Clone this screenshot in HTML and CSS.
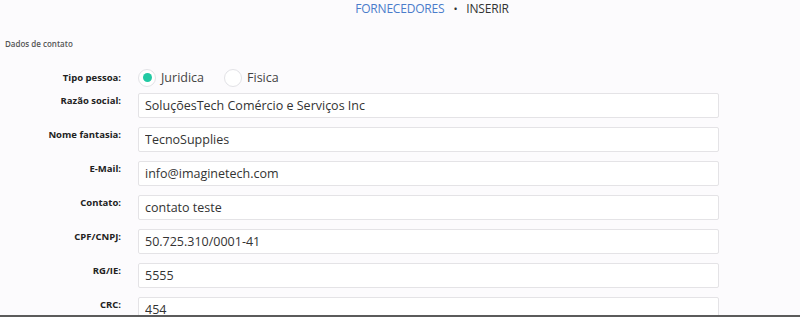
FILE: index.html
```html
<!DOCTYPE html>
<html lang="pt">

<head>
    <meta charset="UTF-8">
    <meta name="viewport" content="width=device-width, initial-scale=1.0">
    <title>Fornecedores - Inserir</title>
    <link rel="stylesheet" href="styles.css">
</head>

<body>
    <div class="page">
        <div class="crumbs">
            <a class="crumb-link" href="#">FORNECEDORES</a>
            <span class="crumb-sep">&bull;</span>
            <span class="crumb-current">INSERIR</span>
        </div>

        <div class="section-title">Dados de contato</div>

        <form class="form">
            <div class="row radio-row">
                <label class="label">Tipo pessoa:</label>
                <div class="options">
                    <label class="option"><input type="radio" name="tipo" checked><span class="dot"></span>Juridica</label>
                    <label class="option"><input type="radio" name="tipo"><span class="dot"></span>Fisica</label>
                </div>
            </div>
            <div class="row">
                <label class="label">Razão social:</label>
                <input class="field" type="text" value="SoluçõesTech Comércio e Serviços Inc">
            </div>
            <div class="row">
                <label class="label">Nome fantasia:</label>
                <input class="field" type="text" value="TecnoSupplies">
            </div>
            <div class="row">
                <label class="label">E-Mail:</label>
                <input class="field" type="text" value="info@imaginetech.com">
            </div>
            <div class="row">
                <label class="label">Contato:</label>
                <input class="field" type="text" value="contato teste">
            </div>
            <div class="row">
                <label class="label">CPF/CNPJ:</label>
                <input class="field" type="text" value="50.725.310/0001-41">
            </div>
            <div class="row">
                <label class="label">RG/IE:</label>
                <input class="field" type="text" value="5555">
            </div>
            <div class="row">
                <label class="label">CRC:</label>
                <input class="field" type="text" value="454">
            </div>
        </form>
    </div>
</body>

</html>
```

FILE: styles.css
```css
* {
    margin: 0;
    padding: 0;
    box-sizing: border-box;
    font-family: 'Open Sans', 'Noto Sans', sans-serif;
}

body {
    background: #fcfbfd;
    color: #333;
}

.page {
    height: 317px;
    overflow: hidden;
    border-bottom: 2px solid #5b5b5b;
}

.crumbs {
    display: flex;
    justify-content: center;
    align-items: center;
    gap: 9px;
    height: 17px;
    font-size: 12px;
    padding-left: 64px;
    letter-spacing: -0.2px;
}

.crumb-link {
    color: #4a7ccb;
    text-decoration: none;
}

.crumb-sep {
    color: #333;
    font-size: 11px;
}

.crumb-current {
    color: #333;
}

.section-title {
    margin-top: 21px;
    padding-left: 5px;
    font-size: 8px;
    font-weight: 600;
    color: #555;
}

.form {
    margin-top: 17px;
    display: flex;
    flex-direction: column;
    gap: 9px;
}

.row {
    display: grid;
    grid-template-columns: 121px 581px;
    column-gap: 17px;
    align-items: start;
}

.label {
    text-align: right;
    font-size: 9.5px;
    font-weight: 700;
    color: #222;
    padding-top: 1px;
}

.radio-row {
    align-items: center;
    height: 23px;
    margin-bottom: -5px;
}

.radio-row .label {
    padding-top: 0;
}

.options {
    display: flex;
    align-items: center;
    gap: 20px;
}

.option {
    display: flex;
    align-items: center;
    gap: 5px;
    font-size: 12.5px;
    color: #444;
}

.option input {
    display: none;
}

.dot {
    width: 18px;
    height: 18px;
    border: 1px solid #e2e2e6;
    border-radius: 50%;
    background: #fff;
    display: flex;
    align-items: center;
    justify-content: center;
}

.option input:checked + .dot::after {
    content: "";
    width: 9px;
    height: 9px;
    border-radius: 50%;
    background: #21c9a3;
}

.field {
    height: 25px;
    border: 1px solid #e4e3e6;
    border-radius: 2px;
    background: #fff;
    padding: 0 6px;
    font-size: 12.5px;
    color: #333;
    outline: none;
}
```
